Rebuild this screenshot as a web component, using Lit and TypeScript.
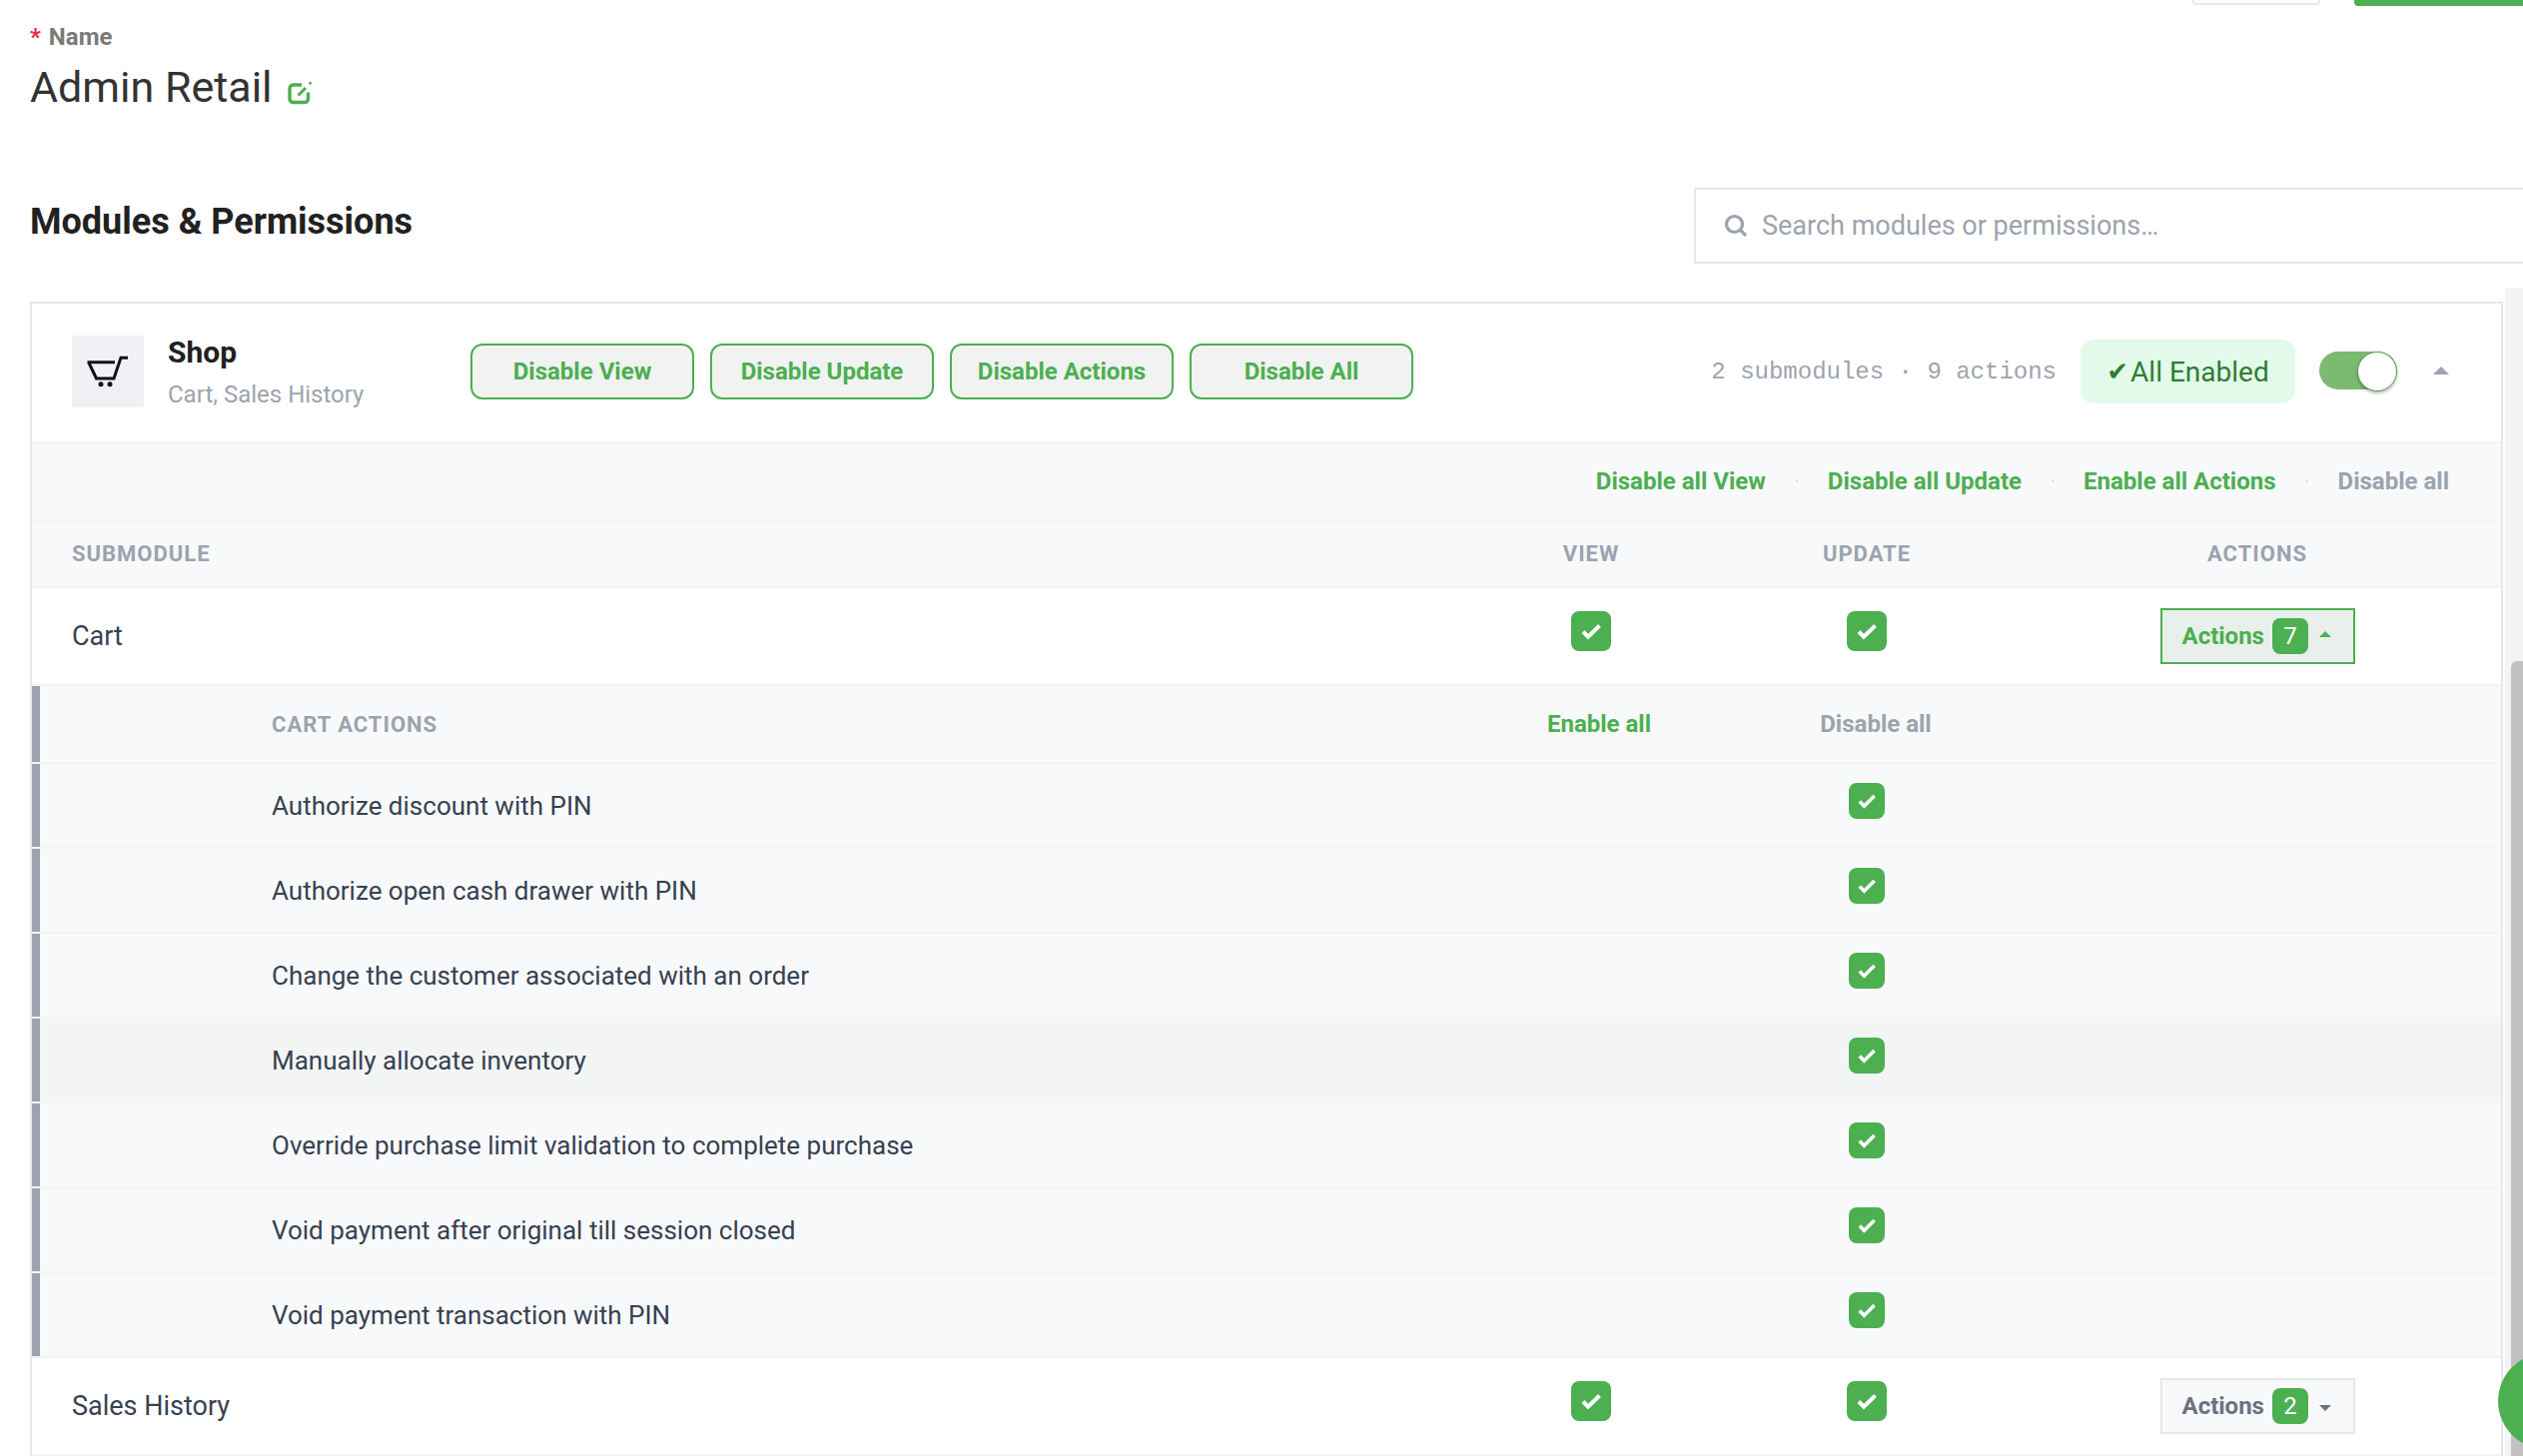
import { LitElement, html, css } from "lit";
import { customElement } from "lit/decorators.js";

const ACTIONS = [
  "Authorize discount with PIN",
  "Authorize open cash drawer with PIN",
  "Change the customer associated with an order",
  "Manually allocate inventory",
  "Override purchase limit validation to complete purchase",
  "Void payment after original till session closed",
  "Void payment transaction with PIN",
];

const check = html`<span class="check"><svg viewBox="0 0 40 40" width="100%" height="100%"><path d="M12 20.5l5 5.2L28.5 14.5" fill="none" stroke="#fff" stroke-width="4"/></svg></span>`;
const checkSm = html`<span class="check sm"><svg viewBox="0 0 36 36" width="100%" height="100%"><path d="M10.8 18.5l4.5 4.7L25.6 13" fill="none" stroke="#fff" stroke-width="3.6"/></svg></span>`;

@customElement("app-root")
export class AppRoot extends LitElement {
  static styles = css`
    :host { display: block; width: 100%; height: 1458px; position: relative; overflow: hidden; background: #fff; font-family: Roboto, "Liberation Sans", sans-serif; color: #374151; }
    * { box-sizing: border-box; }
    .top { height: 6px; display: flex; justify-content: flex-end; gap: 34px; }
    .top .ghost { width: 128px; height: 5px; border: 2px solid #e5e7eb; border-top: 0; border-radius: 0 0 4px 4px; }
    .top .solid { width: 169px; height: 6px; background: #4caf50; border-radius: 0 0 0 4px; }
    .page { padding: 0 20px 0 30px; }
    .label { margin-top: 18px; height: 26px; line-height: 26px; font-size: 24px; font-weight: 700; color: #7a7a7a; }
    .label i { color: #ef2b41; font-style: normal; margin-right: 2px; }
    .title { margin-top: 8px; height: 56px; display: flex; align-items: center; gap: 14px; font-size: 43px; line-height: 56px; color: #333; padding-top: 1px; }
    .title svg { margin-top: 12px; }
    .heading { margin-top: 74px; height: 76px; display: flex; align-items: center; justify-content: space-between; }
    h2 { margin: -9px 0 0; font-size: 36px; font-weight: 700; color: #212121; }
    .search { width: 900px; height: 76px; margin-right: -90px; border: 2px solid #e5e7eb; display: flex; align-items: center; gap: 14px; padding-left: 28px; font-size: 27px; color: #9ca3af; }
    .card { margin-top: 38px; border: 2px solid #e5e7eb; border-bottom: 0; }
    .head { height: 140px; border-bottom: 2px solid #f3f4f6; display: flex; align-items: center; padding: 0 52px 2px 40px; }
    .thumb { width: 72px; height: 72px; background: #f0f1f5; display: flex; align-items: center; justify-content: center; }
    .names { width: 303px; margin-left: 24px; margin-top: 2px; }
    .names b { display: block; font-size: 30px; line-height: 38px; font-weight: 700; color: #212121; }
    .names span { display: block; font-size: 24px; line-height: 34px; margin-top: 6px; color: #9ca3af; }
    .bulk { display: flex; gap: 16px; }
    .bulk span { width: 224px; height: 56px; border: 2px solid #4caf50; border-radius: 12px; background: #f1f3f2; color: #4caf50; font-size: 24px; font-weight: 700; display: flex; align-items: center; justify-content: center; }
    .meta { margin-left: auto; font-family: "Liberation Mono", monospace; font-size: 24px; color: #9ca3af; }
    .pill { margin-left: 24px; width: 215px; height: 64px; border-radius: 14px; background: #e3f9e9; color: #2e7d32; font-size: 28px; display: flex; align-items: center; justify-content: center; gap: 2px; }
    .pill span:first-child { font-family: "DejaVu Sans", sans-serif; font-size: 26px; }
    .toggle { margin-left: 24px; margin-top: -2px; width: 78px; height: 38px; border-radius: 19px; background: #7cb971; position: relative; }
    .toggle::after { content: ""; position: absolute; right: 0; top: 0; width: 38px; height: 38px; border-radius: 50%; background: #fff; border: 1px solid #5a9e55; box-shadow: 0 2px 3px rgba(0,0,0,.25); }
    .caret { width: 0; height: 0; border-left: 8px solid transparent; border-right: 8px solid transparent; }
    .caret.up { border-bottom: 8px solid #9ca3af; }
    .head .caret { margin-left: 36px; margin-top: -2px; }
    .tools { height: 78px; background: #f8f9fb; border-bottom: 2px solid #f3f4f6; display: flex; justify-content: flex-end; align-items: center; padding-right: 52px; font-size: 24px; font-weight: 700; color: #4caf50; }
    .tools i { width: 62px; text-align: center; font-style: normal; color: #d9dce1; font-size: 14px; }
    .tools .off { color: #9ca3af; }
    .row { display: grid; grid-template-columns: 1fr 258px 294px 488px; align-items: center; border-bottom: 2px solid #f3f4f6; }
    .row > div { display: flex; justify-content: center; }
    .row > div:first-child { justify-content: flex-start; }
    .thead { height: 67px; background: #f8f9fb; font-size: 22px; font-weight: 700; letter-spacing: 1px; color: #9ca3af; padding-left: 40px; }
    .sub { height: 98px; background: #fff; padding-left: 40px; font-size: 27px; }
    .sub .check { margin-top: -10px; }
    .nested { height: 85px; padding-left: 240px; font-size: 26px; background: linear-gradient(#9ca3af, #9ca3af) left top / 8px 100% no-repeat, #f8f9fb; }
    .nested.hover { background: linear-gradient(#9ca3af, #9ca3af) left top / 8px 100% no-repeat, #f3f5f5; }
    .nested .check { margin-top: -9px; }
    .nested.hdr { height: 78px; font-size: 22px; font-weight: 700; letter-spacing: 1px; color: #9ca3af; }
    .nested.hdr .all { font-size: 24px; font-weight: 700; letter-spacing: 0; padding-left: 16px; }
    .nested.hdr .all.off { padding-left: 18px; }
    .all.on { color: #4caf50; } .all.off { color: #9ca3af; }
    .check { display: block; width: 40px; height: 40px; border-radius: 8px; background: #4caf50; }
    .check.sm { width: 36px; height: 36px; }
    .btn { width: 195px; height: 56px; border: 2px solid #e5e7eb; background: #f8f9fb; color: #6b7280; font-size: 24px; font-weight: 700; display: flex; align-items: center; padding-left: 20px; }
    .btn.open { border-color: #4caf50; background: #e9f0eb; color: #4caf50; }
    .btn em { font-style: normal; font-weight: 400; width: 36px; height: 36px; border-radius: 8px; background: #4caf50; color: #fff; display: flex; align-items: center; justify-content: center; margin-left: 8px; }
    .btn .caret { margin-left: 11px; border-left-width: 6px; border-right-width: 6px; }
    .btn .caret.up { border-bottom: 6px solid #4caf50; margin-top: -4px; }
    .btn .caret.down { border-top: 6px solid #6b7280; margin-top: 4px; }
    .track { position: absolute; top: 288px; right: 0; bottom: 0; width: 18px; background: #f4f4f4; }
    .thumbbar { position: absolute; top: 662px; right: 0; bottom: 0; width: 12px; background: #c1c1c1; border-radius: 6px 0 0 0; }
    .fab { position: absolute; left: 2501px; top: 1355px; width: 96px; height: 96px; border-radius: 50%; background: #4caf50; }
  `;

  render() {
    return html`
      <div class="top"><span class="ghost"></span><span class="solid"></span></div>
      <div class="page">
        <div class="label"><i>*</i> Name</div>
        <div class="title">Admin Retail
          <svg width="26" height="26" viewBox="0 0 26 26" fill="none" stroke="#4caf50" stroke-width="3.4"><path d="M21.5 12.5v6.4a3.6 3.6 0 0 1-3.6 3.6H6.6A3.6 3.6 0 0 1 3 18.9V8.6A3.6 3.6 0 0 1 6.6 5H15"/><path d="M11.5 15.5l7.5-7.5" stroke-width="3"/><path d="M22.6 4.2l1.9-1.9" stroke-width="2.6"/></svg>
        </div>
        <div class="heading">
          <h2>Modules &amp; Permissions</h2>
          <div class="search">
            <svg width="24" height="24" viewBox="0 0 24 24" fill="none" stroke="#9ca3af" stroke-width="3.2"><circle cx="10.5" cy="10.5" r="8"/><path d="M16 16l6 6"/></svg>
            <span>Search modules or permissions…</span>
          </div>
        </div>
        <div class="card">
          <div class="head">
            <div class="thumb">
              <svg width="42" height="36" viewBox="0 0 42 36"><path d="M0.5 8.7H28M1.8 9L9.5 25H27L34 4.2H41" fill="none" stroke="#111" stroke-width="3"/><circle cx="14" cy="30.8" r="2.5" fill="#111"/><circle cx="23" cy="30.8" r="2.5" fill="#111"/></svg>
            </div>
            <div class="names"><b>Shop</b><span>Cart, Sales History</span></div>
            <div class="bulk"><span>Disable View</span><span>Disable Update</span><span>Disable Actions</span><span>Disable All</span></div>
            <div class="meta">2 submodules · 9 actions</div>
            <div class="pill"><span>✔</span><span>All Enabled</span></div>
            <div class="toggle"></div>
            <div class="caret up"></div>
          </div>
          <div class="tools">
            <span>Disable all View</span><i>·</i><span>Disable all Update</span><i>·</i><span>Enable all Actions</span><i>·</i><span class="off">Disable all</span>
          </div>
          <div class="row thead"><div>SUBMODULE</div><div>VIEW</div><div>UPDATE</div><div>ACTIONS</div></div>
          <div class="row sub">
            <div>Cart</div><div>${check}</div><div>${check}</div>
            <div><div class="btn open">Actions<em>7</em><span class="caret up"></span></div></div>
          </div>
          <div class="row nested hdr"><div>CART ACTIONS</div><div class="all on">Enable all</div><div class="all off">Disable all</div><div></div></div>
          ${ACTIONS.map((a, i) => html`<div class="row nested ${i === 3 ? "hover" : ""}"><div>${a}</div><div></div><div>${checkSm}</div><div></div></div>`)}
          <div class="row sub">
            <div>Sales History</div><div>${check}</div><div>${check}</div>
            <div><div class="btn">Actions<em>2</em><span class="caret down"></span></div></div>
          </div>
        </div>
      </div>
      <div class="track"></div><div class="thumbbar"></div><div class="fab"></div>
    `;
  }
}
